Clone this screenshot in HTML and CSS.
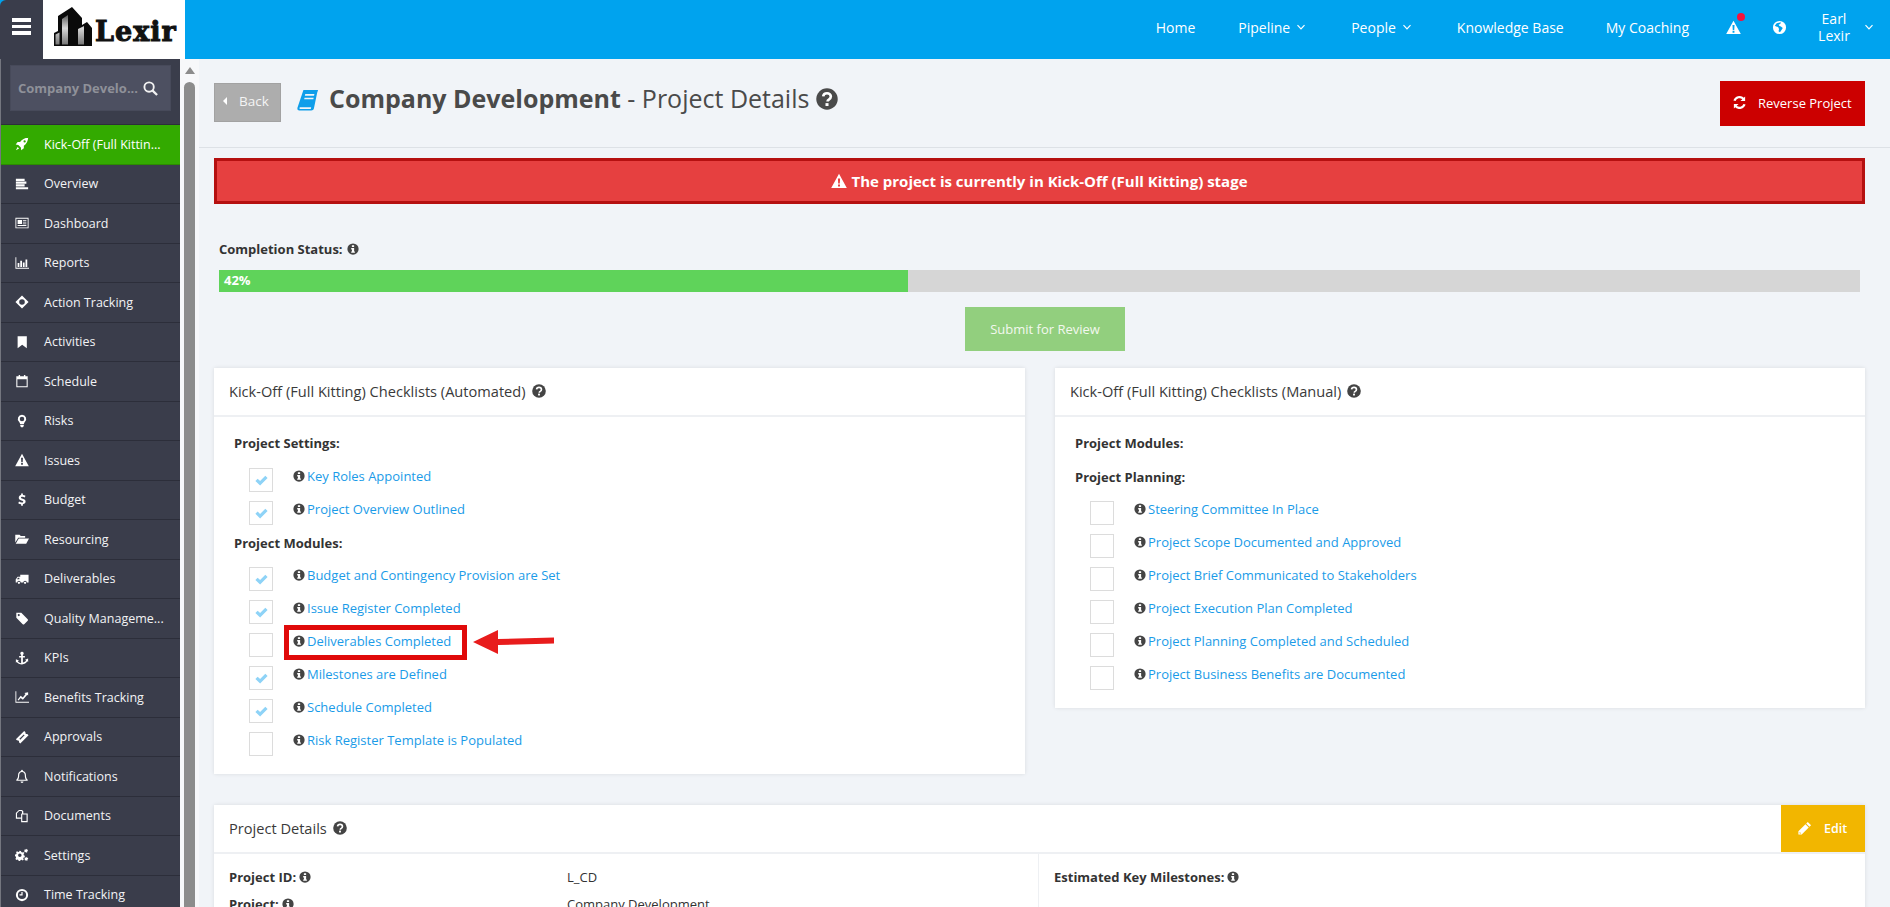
FILE: index.html
```html
<!DOCTYPE html>
<html lang="en">
<head>
<meta charset="utf-8">
<title>Company Development - Project Details</title>
<link rel="stylesheet" href="styles.css">
</head>
<body>
<svg class="defs" width="0" height="0" aria-hidden="true">
  <defs>
    <linearGradient id="logo-grey" x1="0" y1="0" x2="0" y2="1"><stop offset="0" stop-color="#5a5a5a"/><stop offset=".45" stop-color="#d8d8d8"/><stop offset="1" stop-color="#777"/></linearGradient>
  </defs>
  <symbol id="i-info" viewBox="0 0 16 16"><circle cx="8" cy="8" r="7.5" fill="currentColor"/><path d="M6.500 3h3v2.400h-3zM5.600 6.600h3.900v4.600h1v1.900H5.600v-1.900h1V8.500h-1z" fill="#fff"/></symbol>
  <symbol id="i-q" viewBox="0 0 16 16"><circle cx="8" cy="8" r="7.800" fill="currentColor"/><path d="M5.200 6.100C5.400 4.600 6.500 3.800 8 3.800c1.600 0 2.800 1 2.800 2.400 0 1.200-.7 1.700-1.500 2.200-.7.400-.9.700-.9 1.500" fill="none" stroke="#fff" stroke-width="1.900"/><rect x="6.900" y="11" width="2.200" height="2.100" fill="#fff"/></symbol>
  <symbol id="i-warn" viewBox="0 0 16 16"><path d="M8 .8l7.800 14.200H.2zM6.900 5.400l.3 5.200h1.600l.3-5.200zM7 11.500v2h2v-2z" fill="currentColor" fill-rule="evenodd"/></symbol>
  <symbol id="i-check" viewBox="0 0 16 16"><path d="M1.500 8.400l2.400-2.400 2.600 2.600 5.600-5.600 2.400 2.400-8 8z" fill="currentColor"/></symbol>
  <symbol id="i-chev" viewBox="0 0 10 10"><path d="M1.500 3.200L5 6.800l3.500-3.600" fill="none" stroke="currentColor" stroke-width="1.200"/></symbol>
  <symbol id="n-rocket" viewBox="0 0 16 16"><path d="M15.200.8C11 .9 8 2.600 5.800 5.700H3L.8 8.700l3 .4 2.900 2.900.4 3 3-2.200v-2.800c3.100-2.200 4.900-5.300 5.100-10.200zM11 3.700a1.300 1.300 0 1 1 0 2.600 1.300 1.300 0 0 1 0-2.600zM3 11.300L1 15l3.700-2z" fill="currentColor" fill-rule="evenodd"/></symbol>
  <symbol id="n-lines" viewBox="0 0 16 16"><path d="M1 2h10v2.500H1zM1 5.200h12v2.500H1zM1 8.400h10v2.500H1zM1 11.600h14V14H1z" fill="currentColor"/></symbol>
  <symbol id="n-news" viewBox="0 0 16 16"><path d="M.5 2h15v12H.5zM1.500 3v10h13V3zM3 4.500h5v4.500H3zM9 4.500h4v1H9zM9 6.500h4v1H9zM9 8.500h4v1H9zM3 10.300h10v1.200H3z" fill="currentColor" fill-rule="evenodd"/></symbol>
  <symbol id="n-bars" viewBox="0 0 16 16"><path d="M.5 1.500h1V13.500h14.500v1H.5zM3 8h2v4.500H3zM6 5.500h2v7H6zM9 7.500h2v5H9zM12 4h2v8.500h-2z" fill="currentColor"/></symbol>
  <symbol id="n-move" viewBox="0 0 16 16"><path d="M8 .5L15.500 8 8 15.500.5 8zM8 4.800a3.200 3.200 0 1 0 0 6.400 3.200 3.200 0 0 0 0-6.400z" fill="currentColor" fill-rule="evenodd"/></symbol>
  <symbol id="n-mark" viewBox="0 0 16 16"><path d="M3 1.500h10.500v13.500L8.200 11 3 15z" fill="currentColor"/></symbol>
  <symbol id="n-cal" viewBox="0 0 16 16"><path d="M1.500 2.500h2.700V1h1.600v1.500h4.400V1h1.600v1.500h2.700V15h-13zM2.700 6v7.900h10.600V6z" fill="currentColor" fill-rule="evenodd"/></symbol>
  <symbol id="n-bulb" viewBox="0 0 16 16"><path d="M8 .8a4.800 4.800 0 0 1 3.200 8.400c-.6.600-.9 1.300-1 2.300H5.800c-.1-1-.4-1.700-1-2.300A4.800 4.800 0 0 1 8 .8zM8 3a2.600 2.600 0 1 0 0 5.200A2.600 2.600 0 0 0 8 3zM6 12.300h4v1.500L9 15.200H7L6 13.800z" fill="currentColor" fill-rule="evenodd"/></symbol>
  <symbol id="n-dollar" viewBox="0 0 16 16"><path d="M7 .5h2v1.700c1.300.1 2.300.5 3 1l-.8 2c-.9-.6-2-1-3-1-.9 0-1.400.4-1.400.9 0 .6.600.9 2 1.400 2.100.7 3.300 1.500 3.300 3.300 0 1.600-1.100 2.800-3.100 3.100v1.600H7v-1.600c-1.300-.1-2.500-.6-3.300-1.200l.9-2c1 .7 2.200 1.200 3.300 1.200 1 0 1.500-.4 1.500-1 0-.6-.6-.9-2-1.400C5.400 7.800 4.300 7 4.300 5.300c0-1.500 1-2.700 2.700-3z" fill="currentColor"/></symbol>
  <symbol id="n-folder" viewBox="0 0 16 16"><path d="M.3 3h5l1.300 1.500h5V6.500H3.700L.3 12zM4.300 7.500H16l-3.200 6H.8z" fill="currentColor"/></symbol>
  <symbol id="n-truck" viewBox="0 0 16 16"><path d="M6 3h9.500v9h-2a2 2 0 0 0-4 0H6.500a2 2 0 0 0-4 0H.8V8.500L3 5.500h3zM2.200 8.300H5V6.500H3.500zM4.500 11a1.300 1.300 0 1 1 0 2.600 1.300 1.300 0 0 1 0-2.600zM11.500 11a1.300 1.300 0 1 1 0 2.600 1.300 1.300 0 0 1 0-2.600z" fill="currentColor" fill-rule="evenodd"/></symbol>
  <symbol id="n-tag" viewBox="0 0 16 16"><path d="M1.500 2h5.700l7.300 7.300a1.200 1.200 0 0 1 0 1.700L10.500 15a1.200 1.200 0 0 1-1.700 0L1.500 7.700zM4.300 3.500a1.200 1.200 0 1 0 0 2.400 1.200 1.200 0 0 0 0-2.400z" fill="currentColor" fill-rule="evenodd"/></symbol>
  <symbol id="n-anchor" viewBox="0 0 16 16"><path d="M8 .8a2 2 0 0 1 1 3.700v1.300h2.300v1.700H9v5.600c1.600-.2 3-1 3.700-2.200l-1.200-.9 3.500-1.300v3.900l-1-.8C12.900 14 10.700 15.300 8 15.300S3.100 14 2 12.600l-1 .8V9.500l3.500 1.300-1.200.9C4 12.900 5.400 13.700 7 13.900V7.500H4.700V5.800H7V4.500A2 2 0 0 1 8 .8z" fill="currentColor"/></symbol>
  <symbol id="n-line" viewBox="0 0 16 16"><path d="M.5 1.500h1V13.500h14.500v1H.5zM3 11l3.500-4.500 2.500 2 3-4-1.300-1.200L15 2.500v3.800l-1-1-5 5.700-2.500-2L4 12z" fill="currentColor"/></symbol>
  <symbol id="n-ticket" viewBox="0 0 16 16"><path d="M10.500 1l1.500 1.500a1.500 1.500 0 0 0 2 2L15.500 6 6 15.500 4.500 14a1.500 1.500 0 0 0-2-2L1 10.500zM10 5l-5 5 1 1 5-5z" fill="currentColor" fill-rule="evenodd"/></symbol>
  <symbol id="n-bell" viewBox="0 0 16 16"><path d="M8 .8c.6 0 1 .4 1 1v.4c2.200.5 3.500 2.300 3.500 4.600 0 3 .8 4.400 2 5.600v.9h-13v-.9c1.200-1.200 2-2.600 2-5.600 0-2.300 1.300-4.100 3.500-4.600v-.4c0-.6.400-1 1-1zM8 3.300c-2 0-3.200 1.500-3.200 3.700 0 2.500-.5 4-1.300 5.300h9c-.8-1.300-1.300-2.800-1.300-5.300 0-2.200-1.200-3.700-3.200-3.700zM6.300 14.200h3.400a1.700 1.700 0 0 1-3.400 0z" fill="currentColor" fill-rule="evenodd"/></symbol>
  <symbol id="n-files" viewBox="0 0 16 16"><path d="M4.500 1H8l1.500 1.500V5H14.500v10H7V11H1V4.500zM4.800 2.300L2.300 4.800v5H7V5.800l1-1V3l-.6-.7zM8.300 6.300v7.400h4.900V6.300z" fill="currentColor" fill-rule="evenodd"/></symbol>
  <symbol id="n-cogs" viewBox="0 0 16 16"><path d="M5.200 3l1.600.3.400 1.300 1.200.6 1.200-.6 1 1.300-.8 1 .2 1.400 1.200.5v1.700l-1.300.4-.5 1.200.6 1.200-1.300 1-1-.8-1.400.2-.4 1.200H4.200l-.4-1.300-1.200-.5-1.200.6-1-1.300.8-1-.2-1.400L0 9.200V7.500l1.300-.4.500-1.200-.6-1.200 1.300-1 1 .8 1.200-.3zM5.500 6.300a2 2 0 1 0 0 4 2 2 0 0 0 0-4zM13 .8l.5 1 1.100.1.200 1-.8.8.2 1-1 .6-.9-.6-1 .4-.7-.8.4-1-.5-1 .8-.7 1 .2zM13.300 10l.5 1 1.100.1.200 1-.8.8.2 1-1 .6-.9-.6-1 .4-.7-.8.4-1-.5-1 .8-.7 1 .2z" fill="currentColor" fill-rule="evenodd"/></symbol>
  <symbol id="n-clock" viewBox="0 0 16 16"><path d="M8 1a7 7 0 1 1 0 14A7 7 0 0 1 8 1zm0 2.300a4.700 4.700 0 1 0 0 9.400 4.700 4.700 0 0 0 0-9.400zM7.300 4.700h1.400v3.900H5.200V7.200h2.100z" fill="currentColor" fill-rule="evenodd"/></symbol>
</svg>

<header class="topbar">
  <button class="burger" aria-label="Menu"><span></span><span></span><span></span></button>
  <div class="logo">
    <svg class="logo-mark" viewBox="0 0 38 40" aria-hidden="true">
      <path d="M0 26l4-2V9L18 0l10 11v7l5-3 5 6v18H0z" fill="#0a0a0a"/>
      <path d="M1.500 27.500l4-2v12h-4zM8 12l6-4v29.500H8zM24 22l6-3v18.500h-6z" fill="url(#logo-grey)"/>
    </svg>
    <span class="logo-text">Lexir</span>
  </div>
  <nav class="topnav">
    <a class="home">Home</a>
    <a class="has-chev">Pipeline <svg class="chev"><use href="#i-chev"/></svg></a>
    <a class="has-chev">People <svg class="chev"><use href="#i-chev"/></svg></a>
    <a>Knowledge Base</a>
    <a>My Coaching</a>
    <span class="tool alert"><svg class="tool-ico"><use href="#i-warn"/></svg><i class="dot"></i></span>
    <span class="tool"><svg class="tool-ico" viewBox="0 0 16 16"><path d="M8 1a7 7 0 1 1 0 14A7 7 0 0 1 8 1zM5 3.500L3 6l1.500 1 2 .5 1 2-.5 2.500 1.500 1 2-3 1-1.500-2-1.500-1.500-.5L7 5l2-1 .5-1.500z" fill="currentColor" fill-rule="evenodd"/></svg></span>
    <span class="user"><span class="user-name">Earl<br>Lexir</span><svg class="chev"><use href="#i-chev"/></svg></span>
  </nav>
</header>

<div class="shell">
  <aside class="sidebar">
    <div class="side-search">
      <div class="search-box"><span class="search-text">Company Develo...</span>
        <svg class="search-ico" viewBox="0 0 16 16"><circle cx="6.500" cy="6.500" r="5" fill="none" stroke="currentColor" stroke-width="2"/><path d="M10 10l5 5" stroke="currentColor" stroke-width="2.400"/></svg>
      </div>
    </div>
    <ul class="side-menu">
      <li class="active"><svg><use href="#n-rocket"/></svg><span>Kick-Off (Full Kittin...</span></li>
      <li><svg><use href="#n-lines"/></svg><span>Overview</span></li>
      <li><svg><use href="#n-news"/></svg><span>Dashboard</span></li>
      <li><svg><use href="#n-bars"/></svg><span>Reports</span></li>
      <li><svg><use href="#n-move"/></svg><span>Action Tracking</span></li>
      <li><svg><use href="#n-mark"/></svg><span>Activities</span></li>
      <li><svg><use href="#n-cal"/></svg><span>Schedule</span></li>
      <li><svg><use href="#n-bulb"/></svg><span>Risks</span></li>
      <li><svg><use href="#i-warn"/></svg><span>Issues</span></li>
      <li><svg><use href="#n-dollar"/></svg><span>Budget</span></li>
      <li><svg><use href="#n-folder"/></svg><span>Resourcing</span></li>
      <li><svg><use href="#n-truck"/></svg><span>Deliverables</span></li>
      <li><svg><use href="#n-tag"/></svg><span>Quality Manageme...</span></li>
      <li><svg><use href="#n-anchor"/></svg><span>KPIs</span></li>
      <li><svg><use href="#n-line"/></svg><span>Benefits Tracking</span></li>
      <li><svg><use href="#n-ticket"/></svg><span>Approvals</span></li>
      <li><svg><use href="#n-bell"/></svg><span>Notifications</span></li>
      <li><svg><use href="#n-files"/></svg><span>Documents</span></li>
      <li><svg><use href="#n-cogs"/></svg><span>Settings</span></li>
      <li><svg><use href="#n-clock"/></svg><span>Time Tracking</span></li>
    </ul>
  </aside>
  <div class="side-scroll"><i class="scroll-up"></i><i class="scroll-thumb"></i></div>

  <main class="main">
    <div class="page-head">
      <a class="back"><i class="back-caret"></i>Back</a>
      <svg class="book" viewBox="0 0 24 24"><path d="M7 1h16l-1 3-3.500 17c-.3 1.500-1.500 2.500-3 2.500H2.500C1 23.500 0 22.500.5 20.500zM9 5.500l-.4 1.800h10l.4-1.800zM8.200 9.500l-.4 1.800h10l.4-1.800zM3 20l-.3 1c-.1.400.2.800.6.800H15l.5-1.800z" fill="#0f9eea" fill-rule="evenodd"/></svg>
      <h1 class="title"><b>Company Development</b> - Project Details</h1>
      <svg class="title-q"><use href="#i-q"/></svg>
      <a class="reverse"><svg viewBox="0 0 16 16"><path d="M14 1.500v5H9l2-2A4.500 4.500 0 0 0 3.800 6.300L1.500 5.800A6.800 6.800 0 0 1 12.600 3zM2 14.500v-5h5l-2 2a4.500 4.500 0 0 0 7.200-1.800l2.300.5A6.800 6.800 0 0 1 3.400 13z" fill="currentColor"/></svg>Reverse Project</a>
    </div>

    <div class="content">
      <div class="stage-alert"><svg><use href="#i-warn"/></svg>The project is currently in Kick-Off (Full Kitting) stage</div>

      <div class="status-label">Completion Status: <svg class="info"><use href="#i-info"/></svg></div>
      <div class="progress"><div class="progress-fill" style="width:42%">42%</div></div>
      <div class="submit-row"><a class="submit">Submit for Review</a></div>

      <div class="checklists">
        <section class="card">
          <h2 class="card-head">Kick-Off (Full Kitting) Checklists (Automated) <svg class="q"><use href="#i-q"/></svg></h2>
          <div class="card-body">
            <h3 class="group">Project Settings:</h3>
            <div class="check"><span class="box"><svg><use href="#i-check"/></svg></span><svg class="info"><use href="#i-info"/></svg><a>Key Roles Appointed</a></div>
            <div class="check"><span class="box"><svg><use href="#i-check"/></svg></span><svg class="info"><use href="#i-info"/></svg><a>Project Overview Outlined</a></div>
            <h3 class="group">Project Modules:</h3>
            <div class="check"><span class="box"><svg><use href="#i-check"/></svg></span><svg class="info"><use href="#i-info"/></svg><a>Budget and Contingency Provision are Set</a></div>
            <div class="check"><span class="box"><svg><use href="#i-check"/></svg></span><svg class="info"><use href="#i-info"/></svg><a>Issue Register Completed</a></div>
            <div class="check marked"><span class="box"></span><svg class="info"><use href="#i-info"/></svg><a>Deliverables Completed</a>
              <i class="mark-box"></i>
              <svg class="mark-arrow" viewBox="0 0 82 26"><path d="M0 13L25 1v9l56-1.500v6L25 16v9z" fill="#e81c1c"/></svg>
            </div>
            <div class="check"><span class="box"><svg><use href="#i-check"/></svg></span><svg class="info"><use href="#i-info"/></svg><a>Milestones are Defined</a></div>
            <div class="check"><span class="box"><svg><use href="#i-check"/></svg></span><svg class="info"><use href="#i-info"/></svg><a>Schedule Completed</a></div>
            <div class="check"><span class="box"></span><svg class="info"><use href="#i-info"/></svg><a>Risk Register Template is Populated</a></div>
          </div>
        </section>

        <section class="card">
          <h2 class="card-head">Kick-Off (Full Kitting) Checklists (Manual) <svg class="q"><use href="#i-q"/></svg></h2>
          <div class="card-body">
            <h3 class="group">Project Modules:</h3>
            <h3 class="group">Project Planning:</h3>
            <div class="check"><span class="box"></span><svg class="info"><use href="#i-info"/></svg><a>Steering Committee In Place</a></div>
            <div class="check"><span class="box"></span><svg class="info"><use href="#i-info"/></svg><a>Project Scope Documented and Approved</a></div>
            <div class="check"><span class="box"></span><svg class="info"><use href="#i-info"/></svg><a>Project Brief Communicated to Stakeholders</a></div>
            <div class="check"><span class="box"></span><svg class="info"><use href="#i-info"/></svg><a>Project Execution Plan Completed</a></div>
            <div class="check"><span class="box"></span><svg class="info"><use href="#i-info"/></svg><a>Project Planning Completed and Scheduled</a></div>
            <div class="check"><span class="box"></span><svg class="info"><use href="#i-info"/></svg><a>Project Business Benefits are Documented</a></div>
          </div>
        </section>
      </div>

      <section class="card details">
        <div class="details-head">
          <h2 class="card-head">Project Details <svg class="q"><use href="#i-q"/></svg></h2>
          <a class="edit"><svg viewBox="0 0 16 16"><path d="M11.500 1l3.500 3.500-1.700 1.700-3.500-3.500zM9 3.500L12.500 7l-7.500 7.500H1.500V11zM2.800 11.500v1.800h1.700z" fill="currentColor" fill-rule="evenodd"/></svg>Edit</a>
        </div>
        <div class="details-body">
          <div class="details-left">
            <div class="row"><span class="row-label">Project ID: <svg class="info"><use href="#i-info"/></svg></span><span>L_CD</span></div>
            <div class="row"><span class="row-label">Project: <svg class="info"><use href="#i-info"/></svg></span><span>Company Development</span></div>
          </div>
          <div class="details-right">
            <span class="row-label">Estimated Key Milestones: <svg class="info"><use href="#i-info"/></svg></span>
          </div>
        </div>
      </section>
    </div>
  </main>
</div>
</body>
</html>
```

FILE: styles.css
```css
* { box-sizing: border-box; }
html, body { margin: 0; height: 100%; overflow: hidden; }
body { font-family: "Open Sans", sans-serif; font-size: 13px; color: #333; background: #f1f4f8; }
.defs { position: absolute; }
a { text-decoration: none; }
h1, h2, h3 { margin: 0; }

/* Top bar */
.topbar { height: 59px; display: flex; background: #00a3ee; }
.burger { width: 43px; height: 59px; border: 0; padding: 18px 12px 0; background: #3a3d4b; display: flex; flex-direction: column; gap: 3px; border-radius: 6px 0 0 0; }
.burger span { display: block; width: 19px; height: 3.500px; background: #fff; }
.logo { width: 142px; height: 59px; background: #fff; display: flex; align-items: flex-start; padding: 7px 0 0 11px; }
.logo-mark { width: 38px; height: 40px; flex: none; }
.logo-text { font-family: "DejaVu Serif", serif; font-weight: 700; font-size: 27px; line-height: 32px; margin: 9px 0 0 3px; color: #111; letter-spacing: 1px; -webkit-text-stroke: 1px #111; }
.topnav { margin-left: auto; display: flex; align-items: center; color: #fff; padding: 0 16px 5px 0; font-size: 14px; }
.topnav > a { color: #fff; padding: 0 21px; white-space: nowrap; display: flex; align-items: center; gap: 6px; }
.topnav > .home { padding-right: 22px; }
.topnav > .has-chev { padding-right: 24px; }
.chev { width: 10px; height: 10px; flex: none; }
.tool { width: 46px; display: flex; justify-content: center; position: relative; }
.tool-ico { width: 15px; height: 15px; }
.dot { position: absolute; top: -7px; left: 27px; width: 8px; height: 8px; border-radius: 50%; background: #f5123c; }
.user { display: flex; align-items: center; gap: 12px; margin-left: 14px; }
.user-name { text-align: center; line-height: 17px; width: 36px; }

/* Shell */
.shell { display: flex; height: calc(100vh - 59px); }
.sidebar { width: 180px; flex: none; background: #3a3d4b; border-left: 1px solid #74767f; overflow: hidden; }
.side-search { height: 66px; padding: 6px 9px 14px; border-bottom: 1px solid #2c2e3a; }
.search-box { height: 46px; background: #4d5061; border: 1px solid #474a5a; display: flex; align-items: center; padding: 0 12px 0 7px; justify-content: space-between; }
.search-text { font-weight: 700; color: #8f9199; white-space: nowrap; }
.search-ico { width: 15px; height: 15px; color: #f2f2f2; margin-left: -4px; }
.side-menu { list-style: none; margin: 0; padding: 0; }
.side-menu li { height: 39.5px; display: flex; align-items: center; color: #f2f3f5; border-bottom: 1px solid #2c2e3a; font-size: 12.500px; white-space: nowrap; }
.side-menu svg { width: 14px; height: 14px; margin: 0 15px 0 14px; flex: none; color: #fff; }
.side-menu .active { background: #33aa00; color: #fff; border-bottom-color: #2c8c00; }
.side-scroll { width: 19px; flex: none; background: #f7f8fa; position: relative; padding: 23px 4px 0 4px; }
.scroll-up { position: absolute; top: 8px; left: 5px; border: 5px solid transparent; border-top: 0; border-bottom: 7px solid #8c8c8c; }
.scroll-thumb { display: block; height: 100%; background: #8c8c8c; border-radius: 6px 6px 0 0; width: 11px; }

/* Main */
.main { flex: 1; min-width: 0; overflow: hidden; }
.page-head { height: 89px; border-bottom: 1px solid #dde1e6; display: flex; align-items: flex-start; padding: 24px 25px 0 15px; }
.back { width: 67px; height: 39px; background: #adadad; border: 1px solid #a2a2a2; color: #f4f4f4; font-size: 13.500px; display: flex; align-items: center; padding: 0 0 3px 8px; gap: 12px; }
.back-caret { border: 4px solid transparent; border-left: 0; border-right: 4px solid #fff; }
.book { width: 22px; height: 22px; margin: 6px 10px 0 16px; flex: none; }
.title { font-size: 25px; line-height: 32px; font-weight: 400; color: #4a4a4a; white-space: nowrap; margin-top: -1px; }
.title-q { width: 22px; height: 22px; margin: 5px 0 0 7px; color: #4a4a4a; flex: none; }
.reverse { margin-left: auto; margin-top: -2px; width: 145px; height: 45px; background: #cc0000; color: #fff; display: flex; align-items: center; font-size: 13px; padding: 0 0 2px 12px; gap: 11px; }
.reverse svg { width: 15px; height: 15px; flex: none; }

.content { padding: 10px 25px 0 15px; }
.stage-alert { height: 46px; background: #e64040; border: 3px solid #b51010; color: #fff; font-weight: 700; font-size: 15px; display: flex; align-items: center; justify-content: center; gap: 4px; }
.stage-alert svg { width: 16px; height: 16px; }
.status-label { margin: 36px 0 0 5px; height: 18px; line-height: 18px; font-size: 13px; font-weight: 700; color: #333; display: flex; align-items: center; gap: 4px; }
.info { width: 12px; height: 12px; color: #444; flex: none; }
.progress { margin: 12px 5px 0; height: 22px; background: #d6d6d6; }
.progress-fill { height: 100%; background: #5fd35a; color: #fff; font-weight: 700; font-size: 13px; line-height: 21px; padding-left: 5px; }
.submit-row { display: flex; justify-content: center; margin: 15px 0 0 11px; }
.submit { width: 160px; height: 44px; background: #92cf7e; color: #f2f8ee; font-size: 13px; display: flex; align-items: center; justify-content: center; }

.checklists { display: grid; grid-template-columns: 811px 810px; gap: 30px; align-items: start; margin-top: 17px; }
.card { background: #fff; box-shadow: 0 0 4px rgba(0, 0, 0, .1); }
.card-head { height: 49px; border-bottom: 2px solid #eef0f3; font-size: 14.600px; font-weight: 400; color: #3a3a3a; display: flex; align-items: center; gap: 6px; padding: 0 0 2px 15px; }
.q { width: 14px; height: 14px; color: #444; flex: none; }
.card-body { padding: 17px 20px 11px; }
.group { height: 33px; font-size: 13px; font-weight: 700; color: #333; line-height: 18px; }
.group + .check { margin-top: -1px; }
.check + .group { margin-top: 2px; height: 32px; }
.group + .group { margin-top: 1px; height: 32px; }
.check { height: 33px; display: flex; align-items: flex-start; position: relative; padding-left: 15px; }
.box { width: 24px; height: 24px; flex: none; border: 1px solid #dcdcdc; margin: 2px 20px 0 0; display: flex; align-items: center; justify-content: center; color: #8ed3f7; }
.box svg { width: 15px; height: 15px; }
.check .info { margin-top: 4px; margin-right: 2px; }
.check a { color: #1a9be8; line-height: 18px; margin-top: 1px; }
.mark-box { position: absolute; left: 50px; top: -6px; width: 183px; height: 35px; border: 5px solid #e00a0a; }
.mark-arrow { position: absolute; left: 239px; top: -2px; width: 82px; height: 26px; }

.details { margin-top: 31px; }
.details-head { height: 49px; position: relative; }
.edit { position: absolute; top: 0; right: 0; width: 84px; height: 47px; background: #f2b600; color: #fff; display: flex; align-items: center; font-size: 12.500px; font-weight: 600; padding-left: 16px; gap: 12px; }
.edit svg { width: 15px; height: 15px; }
.details-body { display: flex; height: 300px; font-size: 13px; }
.details-left { width: 825px; border-right: 1px solid #eef0f3; padding: 14px 15px 0; }
.details-right { padding: 14px 15px 0; }
.row { display: flex; height: 27px; }
.row-label { font-weight: 700; color: #333; display: flex; align-items: flex-start; gap: 3px; width: 338px; white-space: nowrap; }
.row-label .info { margin-top: 3px; }
```
